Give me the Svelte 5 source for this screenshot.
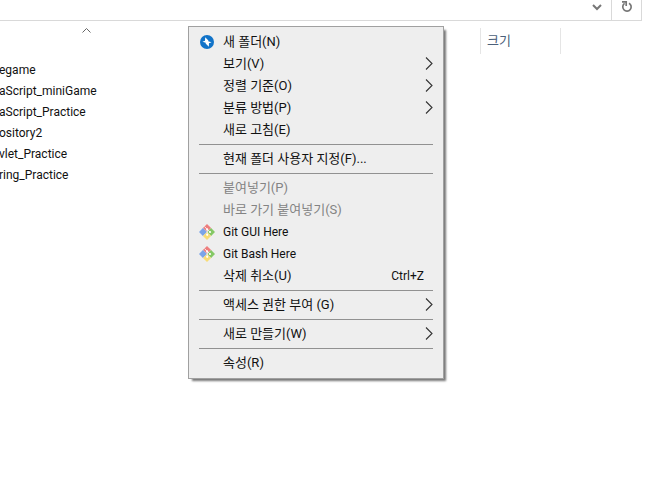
<script>
  const files = ['egame', 'aScript_miniGame', 'aScript_Practice', 'ository2', 'vlet_Practice', 'ring_Practice'];

  const groups = [
    [
      { label: '새 폴더(N)', icon: 'bolt' },
      { label: '보기(V)', sub: true },
      { label: '정렬 기준(O)', sub: true },
      { label: '분류 방법(P)', sub: true },
      { label: '새로 고침(E)' }
    ],
    [{ label: '현재 폴더 사용자 지정(F)...' }],
    [
      { label: '붙여넣기(P)', disabled: true },
      { label: '바로 가기 붙여넣기(S)', disabled: true },
      { label: 'Git GUI Here', icon: 'git' },
      { label: 'Git Bash Here', icon: 'git' },
      { label: '삭제 취소(U)', shortcut: 'Ctrl+Z' }
    ],
    [{ label: '액세스 권한 부여 (G)', sub: true }],
    [{ label: '새로 만들기(W)', sub: true }],
    [{ label: '속성(R)' }]
  ];
</script>

<div class="window">
  <header class="address">
    <div class="path">
      <button class="tool" aria-label="이전 위치">
        <svg width="10" height="7" viewBox="0 0 10 7"><path d="M1 1l4 4 4-4" fill="none" stroke="#777" stroke-width="2" /></svg>
      </button>
    </div>
    <button class="tool refresh" aria-label="새로 고침">
      <svg width="12" height="13" viewBox="0 0 12 13">
        <path d="M8 3.2A4.2 4.2 0 1 1 3.6 3.4" fill="none" stroke="#777" stroke-width="1.7" />
        <path d="M1 1.8h4.2V6" fill="none" stroke="#777" stroke-width="1.7" />
      </svg>
    </button>
  </header>

  <div class="columns">
    <div class="name-col">
      <svg width="9" height="5" viewBox="0 0 9 5"><path d="M.5 4.5l4-4 4 4" fill="none" stroke="#666" /></svg>
    </div>
    <button class="size-col">크기</button>
  </div>

  <ul class="files">
    {#each files as file}
      <li>{file}</li>
    {/each}
  </ul>

  <div class="menu" role="menu">
    {#each groups as group, i}
      {#if i > 0}<hr />{/if}
      {#each group as item}
        <button class="item" role="menuitem" disabled={item.disabled}>
          <span class="icon">
            {#if item.icon === 'bolt'}
              <svg width="14" height="14" viewBox="0 0 14 14">
                <circle cx="7" cy="7" r="7" fill="#1173c8" />
                <path d="M5.2 2.2L8.4 5.4 8.2 6.2 11.6 7.2 9 8.2 8.8 11.8 5.6 8.6 5.8 7.8 2.4 6.8 5 5.8z" fill="#fff" />
              </svg>
            {:else if item.icon === 'git'}
              <svg width="16" height="16" viewBox="0 0 16 16">
                <path d="M8 0l4.1 4.1L8 8 3.9 4.1z" fill="#ee7d7d" />
                <path d="M3.9 3.9L8 8l-4.1 4.1L0 8z" fill="#7ba4e8" />
                <path d="M12.1 3.9L16 8l-3.9 4.1L8 8z" fill="#85c865" />
                <path d="M8 8l4.1 4.1L8 16l-4.1-3.9z" fill="#f8dc75" />
                <path d="M5.6 2.6l2.6 2.8v5.2M8.4 5.6l2.4 2.2" fill="none" stroke="#f5f5f5" stroke-width=".9" />
                <g fill="#fff"><circle cx="8.2" cy="5.4" r="1.1" /><circle cx="11" cy="8" r="1.1" /><circle cx="8.2" cy="10.8" r="1.1" /></g>
              </svg>
            {/if}
          </span>
          <span class="label" class:latin={item.icon === 'git'}>{item.label}</span>
          {#if item.shortcut}<span class="shortcut">{item.shortcut}</span>{/if}
          {#if item.sub}
            <svg class="arrow" width="8" height="13" viewBox="0 0 8 13"><path d="M1 .5l6 6-6 6" fill="none" stroke="#333" stroke-width="1.1" /></svg>
          {/if}
        </button>
      {/each}
    {/each}
  </div>
</div>

<style>
  :global(body) { background: #fff; }
  .window {
    position: relative;
    min-height: 100vh;
    overflow: hidden;
    font: 12px/22px Roboto, "Noto Sans CJK KR", sans-serif;
    color: #111;
  }
  button {
    font: inherit;
    color: inherit;
    background: none;
    border: 0;
    padding: 0;
  }
  .address {
    display: flex;
    height: 20px;
    margin-right: 12px;
    border: solid #d9d9d9;
    border-width: 0 1px 1px 0;
  }
  .path {
    flex: 1;
    display: flex;
    justify-content: flex-end;
  }
  .tool {
    width: 28px;
    height: 14px;
    display: flex;
    align-items: center;
    justify-content: center;
  }
  .refresh {
    width: 30px;
    height: 20px;
    padding-bottom: 7px;
    border-left: 1px solid #d9d9d9;
  }
  .columns {
    display: flex;
    height: 26px;
    margin-top: 7px;
  }
  .name-col {
    width: 173px;
    text-align: center;
    line-height: 0;
  }
  .size-col {
    width: 81px;
    margin-left: auto;
    margin-right: 93px;
    padding: 0 6px;
    border: solid #e5e5e5;
    border-width: 0 1px;
    text-align: left;
    font-size: 13px;
    color: #4c607a;
  }
  .files {
    list-style: none;
    margin: 6px 0 0 -1px;
    padding: 0;
    line-height: 21px;
  }
  .menu {
    position: absolute;
    left: 188px;
    top: 26px;
    width: 256px;
    box-sizing: border-box;
    padding: 3px 10px 5px;
    background: #eee;
    border: 1px solid #a0a0a0;
    box-shadow: 3px 3px 2px -1px #777;
  }
  .item {
    display: flex;
    align-items: center;
    width: 100%;
    height: 22px;
    text-align: left;
    white-space: nowrap;
  }
  .item:disabled { color: #838383; }
  .icon {
    width: 16px;
    height: 16px;
    margin-right: 8px;
    padding-top: 2px;
    display: flex;
    align-items: center;
    justify-content: center;
  }
  .label, .shortcut { padding-top: 2px; }
  .label { flex: 1; font-size: 13px; }
  .latin { font-size: 12px; }
  .shortcut { margin-right: 9px; }
  hr {
    height: 1px;
    margin: 4px 0 2px;
    border: 0;
    background: #919191;
  }
</style>
